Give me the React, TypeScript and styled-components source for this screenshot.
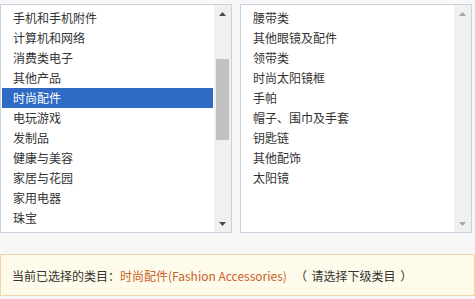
import React from "react";
import styled, { createGlobalStyle } from "styled-components";

const GlobalStyle = createGlobalStyle`
  html, body {
    margin: 0;
    padding: 0;
    background: #f7f7f7;
  }
  body {
    font-family: "Noto Sans CJK SC", "Liberation Sans", sans-serif;
    font-size: 12px;
    color: #333;
  }
`;

const Page = styled.div`
  width: 475px;
  height: 299px;
  display: flex;
  flex-direction: column;
  padding-top: 4px;
  box-sizing: border-box;
`;

const Lists = styled.div`
  display: flex;
  gap: 8px;
`;

const ListBox = styled.div`
  width: 232px;
  height: 229px;
  box-sizing: border-box;
  border: 1px solid #c8d2de;
  background: #fff;
  display: flex;
`;

const Items = styled.ul`
  flex: 1;
  list-style: none;
  margin: 0;
  padding: 3px 1px 0 1px;
  overflow: hidden;
`;

const Item = styled.li<{ $selected?: boolean }>`
  height: 20px;
  line-height: 20px;
  padding-left: 11px;
  white-space: nowrap;
  color: ${(p) => (p.$selected ? "#fff" : "#333")};
  background: ${(p) => (p.$selected ? "#2f6bc5" : "transparent")};
`;

const Track = styled.div`
  width: 17px;
  background: #f0f0f0;
  display: flex;
  flex-direction: column;
  align-items: center;
`;

const Arrow = styled.div<{ $dim?: boolean }>`
  height: 17px;
  width: 17px;
  display: flex;
  align-items: center;
  justify-content: center;
  color: ${(p) => (p.$dim ? "#a6a6a6" : "#4a4a4a")};
`;

const Spacer = styled.div`
  flex: 1;
`;

const Thumb = styled.div`
  width: 13px;
  background: #c1c1c1;
`;

const Status = styled.div`
  margin-top: 21px;
  height: 42px;
  box-sizing: border-box;
  border: 1px solid #f3d5a6;
  background: #fffbea;
  display: flex;
  align-items: center;
  padding-left: 11px;
  white-space: nowrap;
`;

const Current = styled.span`
  color: #c8622a;
`;

const Hint = styled.span`
  margin-left: 8px;
  word-spacing: 2px;
`;

const Up = () => (
  <svg width="7" height="4" viewBox="0 0 7 4">
    <polygon points="3.5,0 7,4 0,4" fill="currentColor" />
  </svg>
);

const Down = () => (
  <svg width="7" height="4" viewBox="0 0 7 4">
    <polygon points="0,0 7,0 3.5,4" fill="currentColor" />
  </svg>
);

const leftItems = [
  "手机和手机附件",
  "计算机和网络",
  "消费类电子",
  "其他产品",
  "时尚配件",
  "电玩游戏",
  "发制品",
  "健康与美容",
  "家居与花园",
  "家用电器",
  "珠宝",
];

const rightItems = [
  "腰带类",
  "其他眼镜及配件",
  "领带类",
  "时尚太阳镜框",
  "手帕",
  "帽子、围巾及手套",
  "钥匙链",
  "其他配饰",
  "太阳镜",
];

const App: React.FC = () => {
  return (
    <Page>
      <GlobalStyle />
      <Lists>
        <ListBox>
          <Items>
            {leftItems.map((name) => (
              <Item key={name} $selected={name === "时尚配件"}>
                {name}
              </Item>
            ))}
          </Items>
          <Track>
            <Arrow>
              <Up />
            </Arrow>
            <div style={{ height: 37 }} />
            <Thumb style={{ height: 81 }} />
            <Spacer />
            <Arrow>
              <Down />
            </Arrow>
          </Track>
        </ListBox>
        <ListBox>
          <Items>
            {rightItems.map((name) => (
              <Item key={name}>{name}</Item>
            ))}
          </Items>
          <Track>
            <Arrow $dim>
              <Up />
            </Arrow>
            <Spacer />
            <Arrow $dim>
              <Down />
            </Arrow>
          </Track>
        </ListBox>
      </Lists>
      <Status>
        当前已选择的类目：<Current>时尚配件(Fashion Accessories)</Current>
        <Hint>（ 请选择下级类目 ）</Hint>
      </Status>
    </Page>
  );
};

export default App;
